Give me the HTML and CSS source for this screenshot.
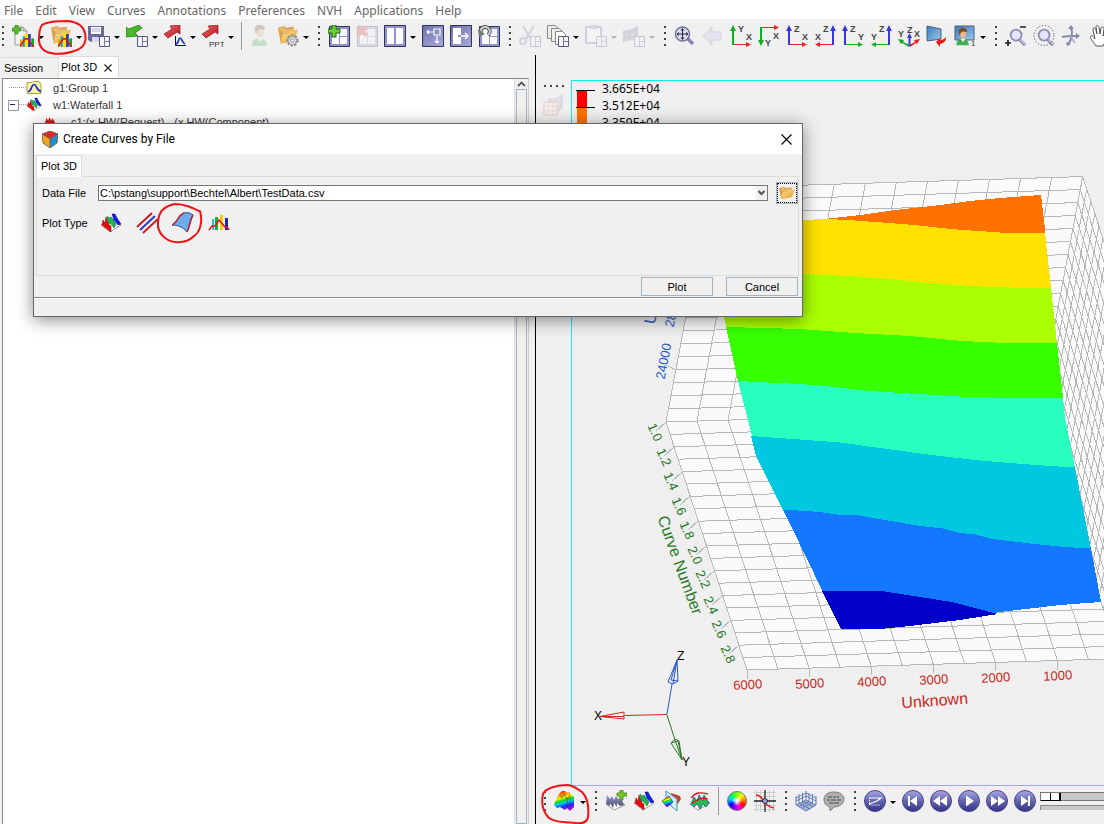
FILE: index.html
```html
<!DOCTYPE html>
<html lang="en">
<head>
    <meta charset="UTF-8">
    <meta name="viewport" content="width=device-width, initial-scale=1.0">
    <title>Plot 3D</title>
    <link rel="stylesheet" href="styles.css">
</head>
<body>
    <!-- Shared icon parts -->
    <svg class="defs" width="0" height="0" aria-hidden="true">
        <defs>
            <linearGradient id="gFolder" x1="0" y1="0" x2="1" y2="1"><stop offset="0" stop-color="#fbe59a"/><stop offset="1" stop-color="#e39a1e"/></linearGradient>
            <linearGradient id="gWin" x1="0" y1="0" x2="1" y2="1"><stop offset="0" stop-color="#6b70ae"/><stop offset="1" stop-color="#a9acd6"/></linearGradient>
            <linearGradient id="gBall" x1="0" y1="0" x2="0" y2="1"><stop offset="0" stop-color="#a9a9e6"/><stop offset=".5" stop-color="#6464b0"/><stop offset="1" stop-color="#34348a"/></linearGradient>
            <linearGradient id="gRed" x1="0" y1="0" x2="1" y2="1"><stop offset="0" stop-color="#f07070"/><stop offset="1" stop-color="#b01018"/></linearGradient>
            <linearGradient id="gSky" x1="0" y1="0" x2="1" y2="1"><stop offset="0" stop-color="#3c78b8"/><stop offset="1" stop-color="#9cc8ee"/></linearGradient>
            <linearGradient id="gRain" x1=".3" y1="0" x2=".6" y2="1"><stop offset="0" stop-color="#ff0000"/><stop offset=".2" stop-color="#ff9000"/><stop offset=".34" stop-color="#f0f000"/><stop offset=".48" stop-color="#10d820"/><stop offset=".6" stop-color="#00c8f0"/><stop offset=".76" stop-color="#1030ff"/><stop offset="1" stop-color="#d000e0"/></linearGradient>
            <linearGradient id="gSteel" x1="0" y1="0" x2="0" y2="1"><stop offset="0" stop-color="#9c9ccc"/><stop offset="1" stop-color="#46466e"/></linearGradient>
        </defs>
        <symbol id="bars" viewBox="0 0 13 13"><path d="M0 6h2.500v7H0z" fill="#e8b000"/><path d="M2.500 3h2v10h-2z" fill="#00a8e0"/><path d="M4.500 0h3v13h-3z" fill="#ffe000"/><path d="M7.500 1h2.500v12H7.500z" fill="#2038d0"/><path d="M10.500 5h2.500v8h-2.500z" fill="#00b020"/><path d="M0 12.500 5 5l3 1 4.500 7" fill="none" stroke="#e01818" stroke-width="1.500"/></symbol>
        <symbol id="folder" viewBox="0 0 22 22"><path d="M0 3l7-2 2 2 8-1 1 5-2 11-13 2z" fill="#d8a04c"/><path d="M1 4l6-2 1 3 9-1v4L7 10z" fill="#e8bb70"/><path d="M5 10l5 0 3-3 9-2-4 12-15 4z" fill="url(#gFolder)"/></symbol>
        <symbol id="win" viewBox="0 0 11 11"><path d="M.5.5h10v10H.5z" fill="#f4f4ff" stroke="#54567a"/><path d="M5.500 1v9M5.500 5.500h5" stroke="#7478a4"/></symbol>
        <symbol id="layout" viewBox="0 0 21 21"><path d="M.5.5h20v20H.5z" fill="#9094cc" stroke="#303358"/><path d="M3 3h7v15H3zM11 3h7v7h-7zM11 11h7v7h-7z" fill="#fafaff"/></symbol>
        <symbol id="lens" viewBox="0 0 22 22"><path d="M14 15l6 6" stroke="#8888b4" stroke-width="3.500"/><path d="M14 14l6 6" stroke="#c8c8e8" stroke-width="1.500"/><circle cx="10" cy="10" r="6" fill="#e4e6fa" stroke="#8c8eb4" stroke-width="2"/></symbol>
        <symbol id="ribbons" viewBox="0 0 22 20"><path d="M1 12l9 7 11-7-8-6z" fill="#fff" stroke="#999"/><path d="M3 7l2 3 1-6 3 8 2 1v6L2 12z" fill="#e80c0c" stroke="#900" stroke-width=".5"/><path d="M7 3l2 2 2-1 5 7-2 4-3-4-3-1z" fill="#20b050" stroke="#064" stroke-width=".5"/><path d="M12 1l3 0 2 4 4 6-3 1-4-5z" fill="#1020e8" stroke="#008" stroke-width=".5"/></symbol>
        <symbol id="user" viewBox="0 0 22 22"><path d="M3 21c0-6 3-8 7-8s8 2 8 8z" fill="#3fae58"/><path d="M8 13l3 4 3-4z" fill="#fff"/><path d="M7 4c0 6 2 9 4 9s4-3 4-8z" fill="#e8b888"/><path d="M6 6c-1-4 1-6 5-6s5 3 5 5l-5-1-2 1-2 4z" fill="#7a4a20"/></symbol>
    </svg>

    <nav class="menu">
        <a href="#">File</a><a href="#">Edit</a><a href="#">View</a><a href="#">Curves</a><a href="#">Annotations</a><a href="#">Preferences</a><a href="#">NVH</a><a href="#">Applications</a><a href="#">Help</a>
    </nav>

    <header class="toolbar">
        <span class="grip first"></span>
        <button class="tool drop" aria-label="New plot"><svg viewBox="0 0 22 22"><path d="M3 2h8l4 4v14H3z" fill="#f2f2f2" stroke="#999"/><path d="M11 2v4h4" fill="#ccc" stroke="#999"/><path d="M3 0h3v3h3v3H6v3H3V6H0V3h3z" fill="#58c030" stroke="#2c8018" stroke-width=".7"/><use href="#bars" x="8" y="8" width="14" height="14"/></svg></button>
        <button class="tool drop" aria-label="Create curves by file"><svg viewBox="0 0 22 22"><use href="#folder" width="22" height="20"/><use href="#bars" x="8" y="8" width="14" height="14"/></svg></button>
        <button class="tool drop" aria-label="Save session"><svg viewBox="0 0 22 22"><path d="M0 1h16v16H3l-3-2z" fill="#686c9c"/><path d="M3 2h10v7H3z" fill="#fff"/><path d="M4 4h8M4 6h8" stroke="#aac"/><path d="M4 12h7v5H4z" fill="#d8d8e8"/><use href="#win" x="11" y="11" width="11" height="11"/></svg></button>
        <button class="tool drop" aria-label="Import"><svg viewBox="0 0 22 22"><path d="M13 0l3 3-7 5 3 3L0 12V2l3 2z" fill="#48b828" stroke="#207010" stroke-width=".7"/><use href="#win" x="11" y="11" width="11" height="11"/></svg></button>
        <button class="tool drop" aria-label="Export curves"><svg viewBox="0 0 22 22"><path d="M16 0l0 9-3-2-9 6-4-4 8-5-2-3z" fill="url(#gRed)" stroke="#981018" stroke-width=".7"/><path d="M11.500 11v9.500H22" fill="none" stroke="#111"/><path d="M12 19c3 0 2-6 4-6s2 5 5 6" fill="none" stroke="#1038d0" stroke-width="1.700"/></svg></button>
        <button class="tool drop" aria-label="Export to presentation"><svg viewBox="0 0 22 22"><path d="M16 0l0 9-3-2-9 6-4-4 8-5-2-3z" fill="url(#gRed)" stroke="#981018" stroke-width=".7"/><text class="tag" x="7" y="22">PPT</text></svg></button>
        <span class="sep"></span>
        <button class="tool" disabled aria-label="User"><svg viewBox="0 0 22 22"><use href="#user" width="22" height="22"/></svg></button>
        <button class="tool drop" aria-label="Folder settings"><svg viewBox="0 0 22 22"><use href="#folder" width="22" height="20"/><circle cx="15.500" cy="15.500" r="5" fill="#ddd" stroke="#888" stroke-width="2" stroke-dasharray="2.400 1.200"/><circle cx="15.500" cy="15.500" r="4" fill="#e8e8e8" stroke="#999"/><circle cx="15.500" cy="15.500" r="1.700" fill="#fff" stroke="#888"/></svg></button>
        <span class="grip"></span>
        <button class="tool" aria-label="Add page"><svg viewBox="0 0 22 22"><use href="#layout" x="1" y="1" width="21" height="21"/><path d="M4 0h4v4h4v4H8v4H4V8H0V4h4z" fill="#68d030" stroke="#246810"/></svg></button>
        <button class="tool" disabled aria-label="Delete page"><svg viewBox="0 0 22 22"><use href="#layout" x="1" y="1" width="21" height="21"/><path d="M0 3l3-3 3 3 3-3 3 3-3 3 3 3-3 3-3-3-3 3-3-3 3-3z" fill="#e03030"/></svg></button>
        <button class="tool drop" aria-label="Page layout"><svg viewBox="0 0 22 22"><path d="M.5.5h21v21H.5z" fill="#9094cc" stroke="#303358"/><path d="M3 3h7v16H3zM12 3h7v16h-7z" fill="#fafaff"/></svg></button>
        <button class="tool" aria-label="Swap windows"><svg viewBox="0 0 22 22"><path d="M.5.5h21v21H.5z" fill="url(#gWin)" stroke="#303358"/><path d="M12 4h6v6h-6zM11 7H5m2-2L5 7l2 2M15 11v7m-2-2l2 2 2-2" fill="none" stroke="#fff" stroke-width="1.200"/><path d="M4 11v7h7" fill="none" stroke="#9a9ece"/></svg></button>
        <button class="tool" aria-label="Expand window"><svg viewBox="0 0 22 22"><path d="M.5.5h21v21H.5z" fill="url(#gWin)" stroke="#303358"/><path d="M3 3h8v16H3z" fill="#fff"/><path d="M11 11h7m-3-3l3 3-3 3" fill="none" stroke="#fff" stroke-width="1.500"/><path d="M8 11h3" stroke="#333"/></svg></button>
        <button class="tool" aria-label="Revert layout"><svg viewBox="0 0 22 22"><use href="#layout" x="1" y="1" width="21" height="21"/><path d="M3 8A4.500 4.500 0 1 1 10 10" fill="none" stroke="#555" stroke-width="4"/><path d="M3 8A4.500 4.500 0 1 1 10 10" fill="none" stroke="#ccc" stroke-width="2"/><path d="M0 4l1 8 6-3z" fill="#777"/></svg></button>
        <span class="grip"></span>
        <button class="tool" disabled aria-label="Cut"><svg viewBox="0 0 22 22"><path d="M4 1l8 13M15 1L7 14" stroke="#7678a0" stroke-width="2"/><circle cx="4" cy="16" r="3" fill="none" stroke="#7678a0" stroke-width="2"/><use href="#win" x="11" y="11" width="11" height="11"/></svg></button>
        <button class="tool drop" aria-label="Copy"><svg viewBox="0 0 22 22"><path d="M.5.5h8l3 3v10H.5z" fill="#eee" stroke="#888"/><path d="M4.500 3.500h8l3 3v10h-11z" fill="#eee" stroke="#888"/><path d="M8.500 6.500h7l3 3v10h-10z" fill="#fff" stroke="#888"/><use href="#win" x="11" y="11" width="11" height="11"/></svg></button>
        <button class="tool drop" disabled aria-label="Paste"><svg viewBox="0 0 22 22"><path d="M1 2h15v16H1z" fill="#fff" stroke="#6c70b0" stroke-width="2"/><path d="M5 0h7v4H5z" fill="#888cc0"/><use href="#win" x="11" y="11" width="11" height="11"/></svg></button>
        <button class="tool drop" disabled aria-label="Overlay"><svg viewBox="0 0 22 22"><path d="M0 6c5-2 7 0 15-5v11c-5 5-11 2-15 6z" fill="#787c9c"/><path d="M4 5v11M9 4v11M0 11c5-2 8 0 15-5" stroke="#aab" fill="none"/><use href="#win" x="11" y="11" width="11" height="11"/></svg></button>
        <span class="grip"></span>
        <button class="tool" aria-label="Fit"><svg viewBox="0 0 22 22"><path d="M13 13l6 6" stroke="#8888b8" stroke-width="3.500"/><circle cx="8.500" cy="9" r="7" fill="#dde" stroke="#707498" stroke-width="1.500"/><path d="M8.500 4v10M3.500 9h10M7 5.500L8.500 3.500 10 5.500M7 12.500l1.500 2 1.500-2M5 7.500L3 9l2 1.500M12 7.500L14 9l-2 1.500" fill="none" stroke="#222440"/></svg></button>
        <button class="tool" disabled aria-label="Previous view"><svg viewBox="0 0 22 22"><path d="M1 11L10 2v5h9v8h-9v5z" fill="#bcbcf0" stroke="#8888b8"/></svg></button>
        <button class="tool axis" aria-label="XY top plane"><svg viewBox="0 0 22 22"><path class="r" d="M3 19h13v-2l5 2.500-5 2.500v-2H3z"/><path class="g" d="M2 20V6H0l3-6 3 6H4v14z"/><text x="8" y="7">Y</text><text x="16" y="15">X</text></svg></button>
        <button class="tool axis" aria-label="XY bottom plane"><svg viewBox="0 0 22 22"><path class="r" d="M3 2h13V0l5 2.500L16 5V3H3z"/><path class="g" d="M2 2v13H0l3 6 3-6H4V2z"/><text x="15" y="14">X</text><text x="7" y="21">Y</text></svg></button>
        <button class="tool axis" aria-label="XZ left plane"><svg viewBox="0 0 22 22"><path class="r" d="M3 19h13v-2l5 2.500-5 2.500v-2H3z"/><path class="b" d="M2 20V6H0l3-6 3 6H4v14z"/><text x="8" y="7">Z</text><text x="16" y="15">X</text></svg></button>
        <button class="tool axis" aria-label="XZ right plane"><svg viewBox="0 0 22 22"><path class="r" d="M19 19H6v-2L1 19.500 6 22v-2h13z"/><path class="b" d="M18 20V6h-2l3-6 3 6h-2v14z"/><text x="9" y="7">Z</text><text x="1" y="15">X</text></svg></button>
        <button class="tool axis" aria-label="YZ rear plane"><svg viewBox="0 0 22 22"><path class="g" d="M3 19h13v-2l5 2.500-5 2.500v-2H3z"/><path class="b" d="M2 20V6H0l3-6 3 6H4v14z"/><text x="8" y="7">Z</text><text x="16" y="15">Y</text></svg></button>
        <button class="tool axis" aria-label="YZ front plane"><svg viewBox="0 0 22 22"><path class="g" d="M19 19H6v-2L1 19.500 6 22v-2h13z"/><path class="b" d="M18 20V6h-2l3-6 3 6h-2v14z"/><text x="9" y="7">Z</text><text x="1" y="15">Y</text></svg></button>
        <button class="tool axis" aria-label="Isometric"><svg viewBox="0 0 22 22"><path class="g" d="M12 20L5 17l1-2-6-1 3 5 1-1 7 4z"/><path class="r" d="M11 20l6-3-1-2 6-1-3 5-1-1-6 4z"/><path class="b" d="M10.500 21v-8H9l2.500-5 2.500 5h-1.500v8z"/><text x="0" y="12">Y</text><text x="9" y="8">Z</text><text x="16" y="12">X</text></svg></button>
        <button class="tool" aria-label="Reverse view"><svg viewBox="0 0 22 22"><path d="M1 1l14 3v10L1 16z" fill="url(#gSky)" stroke="#486080"/><path d="M10 17l4-4v2c3 0 4-1 6-3 0 4-2 6-6 7v3z" fill="#e81818"/></svg></button>
        <button class="tool drop" aria-label="Saved views"><svg viewBox="0 0 22 22"><path d="M1 1h19v14H1z" fill="url(#gSky)" stroke="#486080"/><use href="#user" x="0" y="3" width="18" height="18"/><text class="tag" x="17" y="21">1</text></svg></button>
        <span class="grip"></span>
        <button class="tool" aria-label="Zoom in and out"><svg viewBox="0 0 22 22"><use href="#lens" x="2" width="20" height="22"/><path d="M15 2h6M0 18h6M3 15v6" stroke="#222" stroke-width="1.700"/></svg></button>
        <button class="tool" aria-label="Circle zoom"><svg viewBox="0 0 22 22"><use href="#lens" x="2" width="20" height="22"/><circle cx="11" cy="10.500" r="10" fill="none" stroke="#333" stroke-dasharray="1 2"/></svg></button>
        <button class="tool" aria-label="Rotate"><svg viewBox="0 0 22 22"><path d="M10 2c2 6 1 12-3 18M1 12c5-1 10-1 16-1" fill="none" stroke="#8486b0" stroke-width="2"/><path d="M7 4l3-4 3 4zM15 8l4 3-4 3zM5 17l1 4 4-2z" fill="#8486b0"/><path d="M9 11l5 7" stroke="#a4a6c8" stroke-width="1.500"/></svg></button>
        <button class="tool" aria-label="Pan"><svg viewBox="0 0 22 22"><path d="M7 21C4 17 0 12 2 11s3 2 4 3L4 5c0-3 2-3 3 0l1 4-1-7c0-2 2-2 3 0l1 7 1-6c1-2 3-1 3 1l-1 7 2-4c1-2 3-1 2 1l-2 9-2 4z" fill="#fff" stroke="#555"/></svg></button>
    </header>

    <main class="work">
        <section class="browser">
            <div class="tabs">
                <button class="tab">Session</button>
                <button class="tab active">Plot 3D <svg width="8" height="8" viewBox="0 0 8 8"><path d="M.5.5l7 7M7.500.5l-7 7" stroke="#222" stroke-width="1.200"/></svg></button>
            </div>
            <div class="pane">
                <ul class="tree">
                    <li><i class="branch"></i><svg class="node" viewBox="0 0 16 14"><path d="M1 2h5l1-1h6l2 3v9H1z" fill="#fbf4a0" stroke="#a8a040"/><path d="M2 11c4 0 3-7 6-7s2 6 7 7" fill="none" stroke="#1028d0" stroke-width="1.600"/></svg>g1:Group 1</li>
                    <li><i class="branch box"></i><svg class="node" viewBox="0 0 22 20"><use href="#ribbons" width="22" height="20"/></svg>w1:Waterfall 1</li>
                    <li class="child"><svg class="node" viewBox="0 0 16 14"><path d="M1 13L4 3l2 3 1-4 3 4 1-3 2 4 2 6z" fill="#e01010"/></svg>c1:(x.HW(Request) - (x.HW(Component)</li>
                </ul>
                <div class="scroll">
                    <svg width="9" height="9" viewBox="0 0 9 9"><path d="M1 6l3.500-3.500L8 6" fill="none" stroke="#555" stroke-width="1.800"/></svg>
                    <span class="thumb"></span>
                </div>
            </div>
        </section>

        <section class="viewer">
            <div class="side">
                <span class="grip flat"></span>
                <button class="tool" disabled aria-label="Section"><svg viewBox="0 0 22 22"><path d="M5 5c6-1 9 0 15-5v14c-5 5-9 4-15 6z" fill="#9a9cb4"/><path d="M10 5v13M15 4v12M5 12c6-1 9 0 15-5" stroke="#ddd" fill="none"/><path d="M1 8h13v13H1z" fill="#f4f4f4" stroke="#e05030"/><path d="M5 8v13M10 8v13M1 12h13M1 17h13" fill="none" stroke="#e89080"/></svg></button>
            </div>
            <div class="canvas">
                <svg class="plot" viewBox="572 81 532 704" preserveAspectRatio="xMinYMin slice">
                    <!-- walls and floor -->
                    <path d="M666 422L710 188L1083 176.500L1164 424L1120 658.500L747 670.500z" fill="#fafafa"/>
                    <path id="grid" class="grid" d=""/>
                    <path class="grid" d="M666 422l-10 9M674 447l-10 9M682 472l-10 9M690 496l-10 9M698 521l-10 9M706 546l-10 9M714 571l-10 9M722 596l-10 9M731 620l-10 9M739 645l-10 9M676 370l-10-5M747 670v9M809 668v9M871 666v9M933 664v9M995 662v9M1057 661v9"/>
                    <!-- contour bands, each one drawn down to the next edge -->
                    <g shape-rendering="crispEdges">
                        <path fill="#ff7100" d="M825 219L860 215L896 210L940 205L970 201L1000 198L1041 195L1045.500 234L1000 236L848 224z"/>
                        <path fill="#ffe200" d="M703 224L803 220L825 219L848 220L875 222L915 225L950 229L1000 232.500H1045L1051 288L1040 300L720 300z"/>
                        <path fill="#aaff00" d="M713 268L803 274L850 276L880 278L920 282L970 286L1010 287.500H1051L1057 343L1040 360L732 352z"/>
                        <path fill="#38ff00" d="M726 327L800 329L855 333L910 336L962 341L1004 343H1057L1063 398L1040 410L738 381z"/>
                        <path fill="#28ffbe" d="M738 381L800 384L826 386L870 391L910 393.500L960 396.500L1010 398H1063L1065 418L1075 467L1050 475L752 436z"/>
                        <path fill="#00c8e1" d="M751 436L800 439.500L840 442.500L880 448L932 455L975 460L1010 463L1050 466L1075 467.500L1091 549L1050 560L783 510L756 456z"/>
                        <path fill="#1478ff" d="M783 509.500L820 512L840 515H856L885 520L920 526L943 528.500L960 533L975 534.500L993 539L1030 543.500L1065 547L1091 548.500L1101 602L1060 605L1000 612L960 618L850 625L822 590z"/>
                        <path fill="#0000c8" d="M822 590.500L885 591.500L920 597L952 602L975 608L998 614L960 620L910 626L880 629L841 629.500z"/>
                    </g>
                    <!-- legend -->
                    <g shape-rendering="crispEdges">
                        <path fill="#ff0000" d="M577 90h10v17h-10z"/>
                        <path fill="#ff7100" d="M577 107h10v17h-10z"/>
                        <path d="M576 90.500h19M576 107.500h19" stroke="#000"/>
                    </g>
                    <g class="legend">
                        <text x="602" y="93">3.665E+04</text>
                        <text x="602" y="110">3.512E+04</text>
                        <text x="602" y="127">3.359E+04</text>
                    </g>
                    <!-- axis labels -->
                    <g class="ticks zt">
                        <text transform="translate(668 362) rotate(-79)">24000</text>
                        <text transform="translate(677 310) rotate(-79)">28000</text>
                        <text class="name" transform="translate(661 292) rotate(-79)">Unknown</text>
                    </g>
                    <g class="ticks yt">
                        <text transform="translate(651 434) rotate(66)">1.0</text>
                        <text transform="translate(660 459) rotate(66)">1.2</text>
                        <text transform="translate(667 483) rotate(66)">1.4</text>
                        <text transform="translate(675 508) rotate(66)">1.6</text>
                        <text transform="translate(683 532) rotate(66)">1.8</text>
                        <text transform="translate(691 557) rotate(66)">2.0</text>
                        <text transform="translate(699 581) rotate(66)">2.2</text>
                        <text transform="translate(707 607) rotate(66)">2.4</text>
                        <text transform="translate(715 631) rotate(66)">2.6</text>
                        <text transform="translate(724 656) rotate(66)">2.8</text>
                        <text class="name" transform="translate(675 567) rotate(70)">Curve Number</text>
                    </g>
                    <g class="ticks xt">
                        <text transform="translate(748 689) rotate(-3)">6000</text>
                        <text transform="translate(810 688) rotate(-3)">5000</text>
                        <text transform="translate(872 686) rotate(-3)">4000</text>
                        <text transform="translate(934 684) rotate(-3)">3000</text>
                        <text transform="translate(996 682) rotate(-3)">2000</text>
                        <text transform="translate(1058 680) rotate(-3)">1000</text>
                        <text class="name" transform="translate(935 706) rotate(-4)">Unknown</text>
                    </g>
                    <!-- triad -->
                    <g class="triad">
                        <path stroke="#c82818" d="M667 714.500L625 715.500M600 716.500L624 712v7zM600 716.500h24"/>
                        <path stroke="#2858c8" d="M667 714L672 684M677 660L668 682l5 2 5-3zM677 660l-4 24M677 660l-6 20 7 1"/>
                        <path stroke="#287828" d="M667 715L675 740M682 760L671 743l4-4 4 2zM682 760l-7-20M682 760l-4-19-7 2"/>
                        <text x="594" y="720">X</text>
                        <text x="677" y="660">Z</text>
                        <text x="682" y="766">Y</text>
                    </g>
                </svg>
            </div>
            <footer class="toolbar">
                <span class="grip"></span>
                <button class="tool drop" aria-label="Plot type"><svg viewBox="0 0 22 22"><path d="M1 12L5 4l3-3 3 0 2 2 2-1 5 5v10l-4 4-3-3-2 2-5-3-3 1-3-3z" fill="url(#gRain)"/><path d="M6 5l2 3 2-4 3 5 3-4M13 9v10M16 7v12" fill="none" stroke="#333" stroke-width=".5"/></svg></button>
                <span class="grip"></span>
                <button class="tool" aria-label="Add waterfall"><svg viewBox="0 0 22 22"><path d="M1 14l8 6 11-5-7-6z" fill="#fff" stroke="#999"/><path d="M1 14l1-9 3 4 2-3 2 4 2-4 3 4 1-4 4 9-4 1-3-3v4l-3-4-1 5-3-5v3z" fill="url(#gSteel)"/><path d="M15 0h3v3h4v3h-4v4h-3V6h-3V3h3z" fill="#78c828" stroke="#3c8010" stroke-width=".8"/></svg></button>
                <button class="tool" aria-label="Define curves"><svg viewBox="0 0 22 22"><use href="#ribbons" y="1" width="22" height="20"/></svg></button>
                <button class="tool" aria-label="Cross section"><svg viewBox="0 0 22 22"><path d="M10 3l9 3 1 3-4 6-3-2z" fill="#c8402c"/><path d="M5 1l11 8v12L10 16l-1-4-4-3z" fill="#cdeefa" stroke="#4898b0"/><path d="M1 11l7-5 4 6-6 5z" fill="url(#gRain)" stroke="#224" stroke-width=".6"/></svg></button>
                <button class="tool" aria-label="Surface options"><svg viewBox="0 0 22 22"><path d="M1 14l8 6 12-7-7-6z" fill="#fff" stroke="#999"/><path d="M2 14l3-7 3 4 2-6 4 6 1-6 5 8-3 4-3-3-3 5-3-5-3 3z" fill="#28b848" stroke="#2040c0" stroke-width=".7"/><path d="M2 8c5-6 9-6 17-4M3 13c6-3 9-6 16-4" fill="none" stroke="#e01818" stroke-width="1.300"/></svg></button>
                <span class="sep"></span>
                <button class="tool" aria-label="Contour colors"><span class="wheel"></span></button>
                <button class="tool" aria-label="Coordinate info"><svg viewBox="0 0 22 22"><path d="M2.500 0v22M6.500 0v22M15.500 0v22M19.500 0v22M0 2.500h22M0 6.500h22M0 15.500h22M0 19.500h22" stroke="#ccc"/><path d="M11 0v22M0 11h22" stroke="#222" stroke-width="1.300"/><path d="M2 5c8 0 6 11 18 13" fill="none" stroke="#e81818" stroke-width="1.500"/><circle cx="11" cy="11" r="2.500" fill="#9aa8d8" stroke="#224"/></svg></button>
                <span class="grip"></span>
                <button class="tool" aria-label="Grid"><svg viewBox="0 0 22 22"><path d="M1 15l10-5 10 5-10 6z" fill="#a8b8dc"/><path d="M1 15l10-5 10 5-10 6zM4 16.500l10-5M7 18l10-5M4 13l11 6M8 11.500l10 5M11 1v9M1 6v9M4 4v10M7.500 3v10M14 3v9M17.500 4v10M21 6v9M1 11l10-5 10 5M1 8l10-5 10 5" fill="none" stroke="#6078b4"/></svg></button>
                <button class="tool" aria-label="Note"><svg viewBox="0 0 22 22"><path d="M11 2c6 0 10 3 10 7s-4 8-10 8l-4 4v-4c-4-1-6-4-6-8s4-7 10-7z" fill="#b0b0b0" stroke="#7c7c7c"/><path d="M5 7h4m1 0h3m1 0h2M4 10h3m1 0h5m1 0h4M6 13h4m1 0h5" stroke="#444"/></svg></button>
                <span class="grip"></span>
                <button class="tool drop" aria-label="Animation mode"><svg viewBox="0 0 22 22"><circle cx="11" cy="11" r="10.500" fill="url(#gBall)" stroke="#44448c"/><path d="M5 8h12l-4 3-8 3" fill="none" stroke="#fff" stroke-width="1.200"/><path d="M5.500 8v7h10" fill="none" stroke="#fff" stroke-dasharray="1 1"/></svg></button>
                <button class="tool" aria-label="First frame"><svg viewBox="0 0 22 22"><circle cx="11" cy="11" r="10.500" fill="url(#gBall)" stroke="#44448c"/><path d="M6 6h2v10H6zM15 6v10l-7-5z" fill="#fff"/></svg></button>
                <button class="tool" aria-label="Step back"><svg viewBox="0 0 22 22"><circle cx="11" cy="11" r="10.500" fill="url(#gBall)" stroke="#44448c"/><path d="M10 6v10l-7-5zM17 6v10l-7-5z" fill="#fff"/></svg></button>
                <button class="tool" aria-label="Play"><svg viewBox="0 0 22 22"><circle cx="11" cy="11" r="10.500" fill="url(#gBall)" stroke="#44448c"/><path d="M8 5.500v11l8-5.500z" fill="#fff"/></svg></button>
                <button class="tool" aria-label="Step forward"><svg viewBox="0 0 22 22"><circle cx="11" cy="11" r="10.500" fill="url(#gBall)" stroke="#44448c"/><path d="M5 6v10l7-5zM12 6v10l7-5z" fill="#fff"/></svg></button>
                <button class="tool" aria-label="Last frame"><svg viewBox="0 0 22 22"><circle cx="11" cy="11" r="10.500" fill="url(#gBall)" stroke="#44448c"/><path d="M7 6v10l7-5zM14 6h2v10h-2z" fill="#fff"/></svg></button>
                <div class="time">
                    <input type="range" min="0" max="100" value="0" aria-label="Current time">
                    <span class="track"></span>
                </div>
            </footer>
        </section>
    </main>

    <!-- Create Curves by File -->
    <div class="dialog" role="dialog" aria-labelledby="dlg-title">
        <div class="title">
            <svg width="16" height="17" viewBox="0 0 16 17"><path d="M8 0l8 3-8 5-8-5z" fill="#e02828"/><path d="M0 3l8 5v9l-7-5z" fill="#f4a818"/><path d="M16 3l-8 5v9l7-5z" fill="#1c90d0"/><path d="M0 3l8 5 8-5M8 8v9M0 3l8-3 8 3-1 9-7 5-7-5z" fill="none" stroke="#555" stroke-width=".8"/></svg>
            <span id="dlg-title">Create Curves by File</span>
            <button class="close" aria-label="Close"><svg width="11" height="11" viewBox="0 0 11 11"><path d="M.5.5l10 10M10.500.5l-10 10" stroke="#000" stroke-width="1.200"/></svg></button>
        </div>
        <div class="dlg-tabs"><button class="dlg-tab">Plot 3D</button></div>
        <div class="form">
            <div class="line">
                <label for="dataFile">Data File</label>
                <div class="combo">
                    <select id="dataFile"><option>C:\pstang\support\Bechtel\Albert\TestData.csv</option></select>
                    <svg width="7" height="6" viewBox="0 0 7 6"><path d="M.5 1l3 3 3-3" fill="none" stroke="#555" stroke-width="2"/></svg>
                </div>
                <button class="browse" aria-label="Browse"><svg width="16" height="14" viewBox="0 0 22 22" preserveAspectRatio="none"><use href="#folder" width="22" height="22"/></svg></button>
            </div>
            <div class="line types">
                <span class="lbl">Plot Type</span>
                <button aria-label="Waterfall"><svg viewBox="0 0 22 22"><use href="#ribbons" y="1" width="22" height="20"/></svg></button>
                <button aria-label="Line"><svg viewBox="0 0 22 22"><path d="M1 15L16 1M7 21L22 7" stroke="#c81c1c" stroke-width="2"/><path d="M4 18L19 4" stroke="#2838c8" stroke-width="2"/></svg></button>
                <button aria-label="Surface"><svg viewBox="0 0 22 22"><path d="M0 13C7 9 5 4 12 1c4-1 6 0 9 2-3 5-3 11-6 17-4-5-9-7-15-7z" fill="#6cace8" stroke="#2c4c90"/><path d="M0 13C7 9 5 4 12 1M21 3c-3 5-3 11-6 17" fill="none" stroke="#c02030" stroke-width="1.500"/></svg></button>
                <button aria-label="Bar"><svg viewBox="0 0 22 22"><path d="M4 7h2v11H4z" fill="#20c0e0"/><path d="M7 5h3v13H7z" fill="#10b030"/><path d="M12 3h3v15h-3z" fill="#f0d000"/><path d="M17 6h3v12h-3z" fill="#1828c0"/><path d="M1 18l3-4h3l4-6 6 7h2l2 3" fill="none" stroke="#f01010" stroke-width="1.600"/></svg></button>
            </div>
        </div>
        <div class="actions">
            <button>Plot</button>
            <button>Cancel</button>
        </div>
        <div class="status"></div>
    </div>

    <!-- Red pen marks -->
    <svg class="marks" width="1104" height="824" viewBox="0 0 1104 824" aria-hidden="true">
        <path d="M42 25c6-4 18-4 26-4 9 1 15 4 17 12 2 9-1 14-8 17-8 3-18 5-26 3-8-1-12-7-12-13 0-6 0-11 3-15z"/>
        <path d="M201 212c-8-4-16-8-26-8-11 2-17 8-17 19-1 10 8 18 17 19 9 1 14-1 19-6 6-4 9-14 6-25"/>
        <path d="M543 794c3-6 14-9 25-9 6 1 10 4 14 7 6 6 7 16 6 25-1 6-6 7-13 6-11-1-22-1-27-6-5-6-7-14-5-23z"/>
    </svg>

    <script>
        // Wireframe of the three plot planes: u = columns, v = rows in depth, w = height
        const o = [666, 422], u = [31.05, -0.95], v = [4.05, 12.4], w = [2.45, -13];

        function at(a, b, c) {
            const x = o[0] + a * u[0] + b * v[0] + c * w[0];
            const y = o[1] + a * u[1] + b * v[1] + c * w[1];
            return x.toFixed(1) + " " + y.toFixed(1);
        }

        let d = "";
        for (let i = 0; i <= 12; i++) {
            d += `M${at(i, 0, 18)}L${at(i, 0, 0)}L${at(i, 20, 0)}`;
        }
        for (let i = 0; i <= 20; i++) {
            d += `M${at(0, i, 0)}L${at(12, i, 0)}L${at(12, i, 18)}`;
        }
        for (let i = 1; i <= 18; i++) {
            d += `M${at(0, 0, i)}L${at(12, 0, i)}L${at(12, 20, i)}`;
        }
        document.getElementById("grid").setAttribute("d", d);
    </script>
</body>
</html>
```
FILE: styles.css
```css
* {
    box-sizing: border-box;
}

body {
    margin: 0;
    height: 100vh;
    display: flex;
    flex-direction: column;
    overflow: hidden;
    background-color: #f0f0f0;
    color: #000;
    font-family: "Liberation Sans", Arial, sans-serif;
    font-size: 11px;
}

button {
    border: 0;
    padding: 0;
    margin: 0;
    background: none;
    font: inherit;
    color: inherit;
}

.defs {
    position: absolute;
}

/* Menu */
.menu {
    display: flex;
    gap: 12px;
    height: 19px;
    padding: 2px 4px 0;
    background-color: #fff;
    font-family: "Noto Sans", sans-serif;
    font-size: 12px;
    line-height: 17px;
}

.menu a {
    color: #666;
    text-decoration: none;
}

/* Toolbars */
.toolbar {
    display: flex;
    align-items: center;
    flex: none;
    height: 34px;
    overflow: hidden;
    margin-bottom: 2px;
}

.grip {
    flex: none;
    width: 2px;
    height: 20px;
    margin: 0 5px 0 6px;
    background: linear-gradient(#444 2px, transparent 2px) 0 0 / 2px 6px repeat-y;
}

.grip.first {
    margin: 0 5px 0 2px;
}

.grip.flat {
    width: 20px;
    height: 2px;
    margin: 1px 0 2px 1px;
    background: linear-gradient(90deg, #444 2px, transparent 2px) 0 0 / 6px 2px repeat-x;
}

.sep {
    flex: none;
    width: 9px;
    height: 28px;
    background: linear-gradient(#999, #999) 4px 0 / 1px 28px no-repeat;
}

.tool {
    position: relative;
    flex: none;
    width: 28px;
    height: 28px;
    padding: 3px;
    text-align: left;
}

.tool svg {
    display: block;
    width: 22px;
    height: 22px;
}

.tool.drop {
    width: 38px;
}

.tool.drop::after {
    content: "";
    position: absolute;
    right: 3px;
    top: 14px;
    border: 3px solid transparent;
    border-top-color: #000;
    border-bottom: 0;
}

.tool:disabled {
    opacity: 0.25;
}

.tag {
    font-size: 8px;
    fill: #333;
}

.axis text {
    font-size: 9px;
    font-weight: bold;
    fill: #444;
}

.r { fill: #f02020; }
.g { fill: #10b020; }
.b { fill: #3838d8; }

.wheel {
    display: block;
    width: 20px;
    height: 20px;
    margin: 1px;
    border: 1px solid #777;
    border-radius: 50%;
    background: radial-gradient(circle, #fff 5%, transparent 40%), conic-gradient(#7f0, #ff0, #f80, #f00, #f0c, #80f, #00f, #0cf, #0f6, #7f0);
}

/* Work area */
.work {
    display: flex;
    flex: 1;
    min-height: 0;
}

.browser {
    display: flex;
    flex-direction: column;
    flex: none;
    width: 535px;
    padding: 0 6px 0 2px;
}

.tabs {
    display: flex;
    height: 23px;
    align-items: flex-end;
}

.tab {
    height: 21px;
    width: 56px;
    padding: 0 0 1px 2px;
    border: 1px solid #ddd;
    border-width: 1px 0 0;
    text-align: left;
}

.tab.active {
    height: 22px;
    width: 61px;
    border-width: 1px;
    border-bottom: 0;
    background-color: #fff;
    white-space: nowrap;
}

.tab svg {
    margin-left: 4px;
    vertical-align: -1px;
}

.pane {
    display: flex;
    flex: 1;
    min-height: 0;
    border: 1px solid #888;
    border-width: 1px 1px 0;
    border-right-color: #ccc;
    background-color: #fff;
}

.tree {
    flex: 1;
    margin: 0;
    padding: 0;
    list-style: none;
    color: #333;
}

.tree li {
    display: flex;
    align-items: center;
    height: 17px;
    padding-left: 5px;
}

.tree li.child {
    padding-left: 40px;
}

.tree .node {
    width: 16px;
    height: 15px;
    margin-right: 11px;
}

.tree .child .node {
    width: 14px;
    margin-right: 14px;
}

.branch {
    position: relative;
    width: 18px;
    height: 17px;
    background: linear-gradient(90deg, #999 50%, transparent 50%) 5px 8px / 2px 1px repeat-x;
}

.branch.box::before {
    content: "";
    position: absolute;
    left: 0;
    top: 4px;
    width: 9px;
    height: 9px;
    border: 1px solid #99a;
    background: linear-gradient(#225, #225) 1px 3px / 5px 1px no-repeat #fff;
}

.scroll {
    display: flex;
    flex-direction: column;
    align-items: center;
    width: 14px;
    padding-top: 1px;
    background-color: #f0f0f0;
    border-left: 1px solid #ddd;
}

.scroll .thumb {
    flex: 1;
    width: 11px;
    border: 1px solid #a4b4c0;
}

/* Plot viewer */
.viewer {
    display: grid;
    grid-template-columns: 35px 1fr;
    grid-template-rows: 1fr 38px;
    flex: 1;
    min-width: 0;
    border-left: 1px solid #000;
}

.side {
    display: flex;
    flex-direction: column;
    gap: 2px;
    padding: 29px 0 0 7px;
}

.side .tool {
    padding: 3px 0;
}

.canvas {
    min-height: 0;
    margin-top: 25px;
    border: 1px solid #1ee;
    border-right: 0;
    background-color: #efefef;
    overflow: hidden;
}

.plot {
    display: block;
    width: 100%;
    height: 100%;
}

.viewer .toolbar {
    grid-column: 1 / 3;
    height: 30px;
    padding-left: 2px;
}

.grid {
    fill: none;
    stroke: #b8b8b8;
    shape-rendering: crispEdges;
}

.legend {
    font-family: "Noto Sans", sans-serif;
    font-size: 12px;
}

.ticks {
    font-size: 13px;
    text-anchor: middle;
}

.ticks .name {
    font-size: 16px;
}

.zt { fill: #2858c8; }
.yt { fill: #287828; }
.xt { fill: #c82818; }

.triad {
    fill: none;
    font-size: 12px;
}

.triad text {
    fill: #000;
}

.time {
    flex: 1;
    min-width: 0;
    padding-left: 1px;
}

.time input {
    display: block;
    appearance: none;
    width: 100%;
    height: 9px;
    margin: 0 0 4px;
    border: 1px solid #777;
    border-right: 0;
    background-color: #c8c8c8;
}

.time input::-webkit-slider-thumb {
    appearance: none;
    width: 20px;
    height: 8px;
    border-right: 2px solid #000;
    border-bottom: 1px solid #000;
    background: linear-gradient(#000, #000) 9px 0 / 1px 8px no-repeat #fff;
}

.time .track {
    display: block;
    height: 5px;
    border: 1px solid #888;
    border-width: 1px 0 0 1px;
    background-color: #c8c8c8;
}

/* Dialog */
.dialog {
    position: absolute;
    left: 33px;
    top: 123px;
    width: 770px;
    border: 1px solid #666;
    background-color: #f0f0f0;
    box-shadow: 0 3px 16px rgba(0, 0, 0, 0.45);
}

.title {
    display: flex;
    align-items: center;
    gap: 5px;
    height: 30px;
    padding: 0 10px 0 8px;
    background-color: #fff;
    font-family: Roboto, sans-serif;
    font-size: 12px;
}

.close {
    height: 11px;
    margin-left: auto;
    line-height: 0;
}

.dlg-tabs {
    height: 22px;
    padding: 1px 0 0 2px;
}

.dlg-tab {
    position: relative;
    width: 46px;
    height: 22px;
    padding-bottom: 1px;
    border: 1px solid #dcdcdc;
    border-bottom: 0;
    background-color: #fff;
}

.form {
    height: 100px;
    margin: 0 3px 0 2px;
    padding: 5px 0 0 5px;
    border: 1px solid #dcdcdc;
}

.line {
    display: flex;
    align-items: center;
    height: 22px;
}

.line label,
.line .lbl {
    flex: none;
    width: 56px;
    white-space: nowrap;
}

.combo {
    position: relative;
    flex: 1;
    margin-right: 8px;
}

.combo select {
    display: block;
    appearance: none;
    width: 100%;
    height: 16px;
    padding: 0 1px;
    border: 1px solid #777;
    border-radius: 0;
    background: linear-gradient(#f0f0f0, #f0f0f0) right / 11px 14px no-repeat #fff;
    font: inherit;
    color: #000;
}

.combo svg {
    position: absolute;
    right: 3px;
    top: 5px;
    pointer-events: none;
}

.browse {
    width: 22px;
    height: 22px;
    border: 1px solid #a4b4c0;
    outline: 1px dotted #000;
    outline-offset: -2px;
    line-height: 0;
}

.types {
    gap: 14px;
    margin-top: 8px;
}

.types .lbl {
    width: 44px;
}

.types button {
    width: 22px;
    height: 22px;
}

.types svg {
    display: block;
}

.actions {
    display: flex;
    justify-content: flex-end;
    gap: 13px;
    height: 21px;
    padding: 1px 4px 0 0;
}

.actions button {
    width: 72px;
    height: 19px;
    border: 1px solid #a4b4c0;
}

.status {
    height: 19px;
    border-top: 1px solid #888;
    box-shadow: inset 0 1px #fff;
}

/* Pen marks over the whole window */
.marks {
    position: absolute;
    left: 0;
    top: 0;
    fill: none;
    stroke: #f01414;
    stroke-width: 2;
    pointer-events: none;
}
```
